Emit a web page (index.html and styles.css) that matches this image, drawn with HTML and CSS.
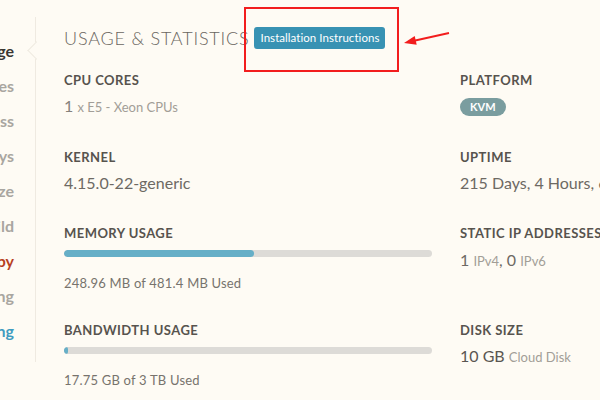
FILE: index.html
```html
<!DOCTYPE html>
<html>
<head>
<meta charset="utf-8">
<link rel="stylesheet" href="styles.css">
</head>
<body>
<div class="page">
  <nav class="sidebar">
    <div class="nav-item active">Usage<span class="notch"></span></div>
    <div class="nav-item">Images</div>
    <div class="nav-item">Access</div>
    <div class="nav-item">SSH Keys</div>
    <div class="nav-item">Resize</div>
    <div class="nav-item">Rebuild</div>
    <div class="nav-item danger">Destroy Copy</div>
    <div class="nav-item">Networking</div>
    <div class="nav-item link">Billing</div>
  </nav>
  <main class="main">
    <div class="header">
      <h1 class="title">USAGE &amp; STATISTICS</h1>
      <button class="btn">Installation Instructions</button>
    </div>
    <div class="grid">
      <div class="stat">
        <div class="label">CPU CORES</div>
        <div class="value"><span class="num muted">1</span> <span class="unit">x E5 - Xeon CPUs</span></div>
      </div>
      <div class="stat">
        <div class="label">PLATFORM</div>
        <span class="pill">KVM</span>
      </div>
      <div class="stat">
        <div class="label">KERNEL</div>
        <div class="value"><span class="num">4.15.0-22-generic</span></div>
      </div>
      <div class="stat">
        <div class="label">UPTIME</div>
        <div class="value"><span class="num">215 Days, 4 Hours, 6 Minutes</span></div>
      </div>
      <div class="stat">
        <div class="label">MEMORY USAGE</div>
        <div class="bar"><div class="fill" style="width: 51.7%"></div></div>
        <div class="used">248.96 MB of 481.4 MB Used</div>
      </div>
      <div class="stat">
        <div class="label">STATIC IP ADDRESSES</div>
        <div class="value ip"><span class="num">1</span> <span class="unit">IPv4</span><span class="num">, 0</span> <span class="unit">IPv6</span></div>
      </div>
      <div class="stat">
        <div class="label">BANDWIDTH USAGE</div>
        <div class="bar"><div class="fill" style="width: 1%"></div></div>
        <div class="used">17.75 GB of 3 TB Used</div>
      </div>
      <div class="stat">
        <div class="label">DISK SIZE</div>
        <div class="value"><span class="num dark">10 GB</span> <span class="unit">Cloud Disk</span></div>
      </div>
    </div>
  </main>
</div>
<div class="highlight"></div>
<svg class="arrow" width="52" height="25" viewBox="0 0 52 25">
  <line x1="49" y1="8" x2="13" y2="16" stroke="#f21d1d" stroke-width="2"/>
  <polygon points="4,18 16.7,19.7 14.7,10.9" fill="#f21d1d"/>
</svg>
</body>
</html>
```
FILE: styles.css
```css
html, body {
  margin: 0;
  padding: 0;
  width: 600px;
  height: 400px;
  overflow: hidden;
  background: #fefbf4;
  font-family: Lato, "Noto Sans", sans-serif;
}

.page {
  display: flex;
  align-items: flex-start;
  width: 600px;
  height: 400px;
}

.sidebar {
  flex: 0 0 36px;
  width: 36px;
  margin-top: 17px;
  height: 345px;
  border-right: 1px solid #efeae1;
  padding-top: 16px;
  box-sizing: border-box;
  position: relative;
  display: flex;
  flex-direction: column;
  align-items: flex-end;
}

.nav-item {
  position: relative;
  height: 35px;
  line-height: 35px;
  font-size: 16px;
  font-weight: 700;
  color: #a9a6a0;
  white-space: nowrap;
  margin-right: 21px;
  text-align: right;
}

.nav-item.active { color: #3a3632; }
.nav-item.danger { color: #b8401e; }
.nav-item.link { color: #3f9cc0; }

.notch {
  position: absolute;
  right: -29px;
  top: 11px;
  width: 12px;
  height: 12px;
  background: #fefbf4;
  border-left: 1px solid #efeae1;
  border-bottom: 1px solid #efeae1;
  transform: rotate(45deg);
}

.main {
  flex: 1;
  padding: 27px 0 0 28px;
  min-width: 0;
}

.header {
  display: flex;
  align-items: center;
  height: 22px;
  margin-bottom: 23px;
}

.title {
  margin: 0 5px 0 0;
  font-size: 18px;
  font-weight: 300;
  letter-spacing: 0.8px;
  color: #6a6660;
  line-height: 22px;
  white-space: nowrap;
}

.btn {
  height: 22px;
  padding: 0 6px;
  border: none;
  border-radius: 3px;
  background: #3892b3;
  color: #fff;
  font-family: Lato, "Noto Sans", sans-serif;
  font-size: 11.5px;
  letter-spacing: 0.05px;
  line-height: 22px;
}

.grid {
  display: grid;
  grid-template-columns: 368px 200px;
  grid-template-rows: 77px 76px 97px auto;
  column-gap: 28px;
}

.stat { white-space: nowrap; }

.label {
  font-size: 13px;
  font-weight: 700;
  line-height: 16px;
  letter-spacing: 0.45px;
  color: #57534e;
}

.value {
  margin-top: 8px;
  line-height: 20px;
  color: #6d6963;
}

.value.ip { margin-top: 9px; }

.num { font-size: 16px; color: #6d6963; }
.num.muted { color: #85817b; }
.num.dark { color: #5a5651; }
.unit { font-size: 13px; color: #a29e97; }

.pill {
  display: inline-block;
  margin-top: 10px;
  height: 18px;
  line-height: 18px;
  padding: 0 10px;
  border-radius: 9px;
  background: #7a9d9f;
  color: #fff;
  font-size: 11px;
  font-weight: 700;
}

.bar {
  margin-top: 9px;
  height: 7px;
  border-radius: 4px;
  background: #dddbd7;
  overflow: hidden;
}

.fill {
  height: 100%;
  background: #66afc7;
  border-radius: 4px;
}

.used {
  margin-top: 17px;
  font-size: 13px;
  letter-spacing: 0.2px;
  line-height: 18px;
  color: #77736d;
}

.highlight {
  position: absolute;
  left: 244px;
  top: 7px;
  width: 155px;
  height: 65px;
  box-sizing: border-box;
  border: 2px solid #f21d1d;
}

.arrow {
  position: absolute;
  left: 400px;
  top: 25px;
}
```
